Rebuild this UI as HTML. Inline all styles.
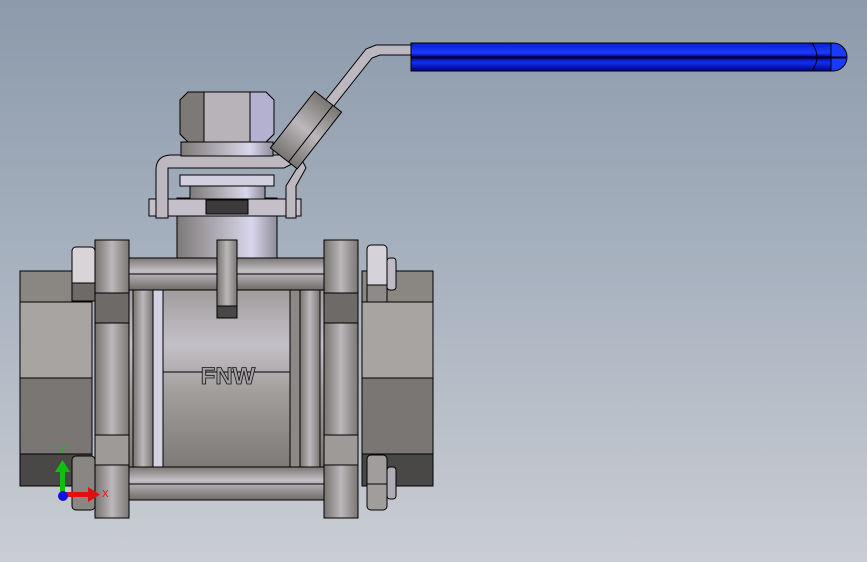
<!DOCTYPE html>
<html><head><style>
html,body{margin:0;padding:0;width:867px;height:562px;overflow:hidden}
body{background:linear-gradient(#8c9aab,#a9b3c0 50%,#cacdd3)}
svg{display:block}
</style></head><body>
<svg width="867" height="562" viewBox="0 0 867 562" xmlns="http://www.w3.org/2000/svg">
<defs>
<linearGradient id="blue" x1="0" y1="0" x2="0" y2="1">
<stop offset="0" stop-color="#0a1ec8"/><stop offset=".35" stop-color="#1a3cff"/><stop offset=".5" stop-color="#0000a0"/><stop offset=".7" stop-color="#1030f0"/><stop offset="1" stop-color="#000080"/></linearGradient>
<linearGradient id="cyl" x1="0" y1="0" x2="1" y2="0">
<stop offset="0" stop-color="#7d7a78"/><stop offset=".5" stop-color="#bcb8c4"/><stop offset=".75" stop-color="#d8d6ec"/><stop offset="1" stop-color="#8f8d98"/></linearGradient>
<linearGradient id="body" x1="0" y1="0" x2="0" y2="1">
<stop offset="0" stop-color="#8e8a87"/><stop offset=".35" stop-color="#c4c0c8"/><stop offset=".55" stop-color="#a29e9c"/><stop offset="1" stop-color="#6e6a67"/></linearGradient>
<linearGradient id="fl" x1="0" y1="0" x2="1" y2="0">
<stop offset="0" stop-color="#77736f"/><stop offset=".5" stop-color="#bbb7bb"/><stop offset="1" stop-color="#7a7672"/></linearGradient>
<linearGradient id="rod" x1="0" y1="0" x2="0" y2="1">
<stop offset="0" stop-color="#7b7774"/><stop offset=".4" stop-color="#c3bfc5"/><stop offset="1" stop-color="#6f6b68"/></linearGradient>
</defs>
<g stroke="#000" stroke-width="1">
<path d="M411 45 L376 45 L366 49 L291 144 L299 150 L372 58 L380 55 L411 55 Z" fill="#bdb8c0"/>
<rect x="411" y="43" width="420" height="28" fill="url(#blue)"/>
<path d="M831 43 H833 A14 14 0 0 1 833 71 H831 Z" fill="#1a3aff"/>
<line x1="411" y1="57.5" x2="846" y2="57.5" stroke-width="2"/>
<path d="M812 43 Q822 57 812 71" fill="none"/>
<rect x="20" y="271" width="72" height="31" fill="#8a8682"/>
<rect x="20" y="302" width="72" height="76" fill="#a8a4a2"/>
<rect x="20" y="378" width="72" height="76" fill="#7a7673"/>
<rect x="20" y="454" width="72" height="32" fill="#4a4847"/>
<rect x="362" y="271" width="71" height="31" fill="#8a8682"/>
<rect x="362" y="302" width="71" height="76" fill="#a8a4a2"/>
<rect x="362" y="378" width="71" height="76" fill="#7a7673"/>
<rect x="362" y="454" width="71" height="32" fill="#4a4847"/>
<rect x="177" y="198" width="100" height="62" fill="url(#cyl)"/>
<rect x="129" y="262" width="195" height="236" fill="url(#body)"/>
<rect x="133" y="285" width="20" height="190" fill="url(#fl)"/>
<rect x="153" y="285" width="10" height="190" fill="#d4d2e2"/>
<rect x="290" y="285" width="10" height="190" fill="#8c8885"/>
<rect x="300" y="285" width="20" height="190" fill="url(#fl)"/>
<line x1="163" y1="372" x2="290" y2="372"/>
<text x="228" y="384" font-family="Liberation Sans, sans-serif" font-size="24" font-weight="bold" text-anchor="middle" fill="#a5a1a4" stroke="#111" stroke-width="0.8">FNW</text>
<rect x="129" y="258" width="195" height="32" fill="url(#rod)"/>
<line x1="129" y1="274" x2="324" y2="274"/>
<rect x="129" y="467" width="195" height="33" fill="url(#rod)"/>
<line x1="129" y1="484" x2="324" y2="484"/>
<rect x="217" y="240" width="20" height="66" fill="url(#fl)"/>
<rect x="217" y="306" width="20" height="12" fill="#4a4847"/>
<rect x="95" y="240" width="34" height="278" fill="url(#fl)"/>
<rect x="324" y="240" width="34" height="278" fill="url(#fl)"/>
<rect x="95" y="293" width="34" height="30" fill="#6e6a67"/>
<rect x="324" y="293" width="34" height="30" fill="#6e6a67"/>
<rect x="95" y="435" width="34" height="30" fill="#9e9a98"/>
<rect x="324" y="435" width="34" height="30" fill="#9e9a98"/>
<rect x="72" y="247" width="23" height="54" rx="4" fill="#d8d4d8"/><rect x="72" y="283" width="23" height="18" fill="#6e6a67"/>
<rect x="72" y="456" width="23" height="54" rx="4" fill="#8a8683"/>
<rect x="367" y="245" width="20" height="57" rx="4" fill="#d6d2da"/><rect x="367" y="285" width="20" height="17" fill="#8e8a8a"/>
<rect x="387" y="258" width="9" height="32" rx="3" fill="#c0bcc6"/>
<rect x="367" y="455" width="20" height="55" rx="4" fill="#a19d9c"/><line x1="367" y1="484" x2="387" y2="484"/>
<rect x="387" y="467" width="9" height="32" rx="3" fill="#b0acb4"/>
<rect x="149" y="199" width="152" height="17" fill="#c4bfc8"/>
<rect x="206" y="200" width="42" height="14" fill="#3c3a3a"/>
<path d="M156 218 V170 Q156 156 170 155 H290 L296 162 L284 168 H168 V218 Z" fill="#bdb8c0"/>
<path d="M296 218 H286 V186 L302 160 L306 168 L296 186 Z" fill="#bdb8c0"/>
<rect x="180" y="175" width="94" height="11" fill="#d2d0e0"/>
<rect x="190" y="186" width="75" height="13" fill="url(#cyl)"/>
<rect x="181" y="142" width="92" height="14" fill="url(#cyl)"/>
<path d="M188 92 H266 L274 100 V134 L266 142 H188 L180 134 V100 Z" fill="#b8b3b8"/>
<path d="M188 92 H204 V142 H188 L180 134 V100 Z" fill="#7d7976"/>
<path d="M250 92 H266 L274 100 V134 L266 142 H250 Z" fill="#b4b0d0"/>
<g transform="translate(306 130) rotate(-52)"><rect x="-36" y="-17" width="72" height="34" fill="url(#fl)"/><line x1="-36" y1="6" x2="36" y2="6"/></g>
</g>
<g>
<rect x="60" y="470" width="5" height="22" fill="#10c010"/><path d="M55 472 L62.5 460 L70 472 Z" fill="#10c010"/>
<rect x="64" y="492" width="26" height="5" fill="#e01010"/><path d="M88 487 L100 494.5 L88 502 Z" fill="#e01010"/>
<circle cx="63" cy="496" r="5" fill="#1010e0"/>
<text x="59" y="453" font-family="Liberation Sans, sans-serif" font-size="10" fill="#10c010">Y</text>
<text x="102" y="497" font-family="Liberation Sans, sans-serif" font-size="10" fill="#e01010">X</text>
</g>
</svg>
</body></html>
